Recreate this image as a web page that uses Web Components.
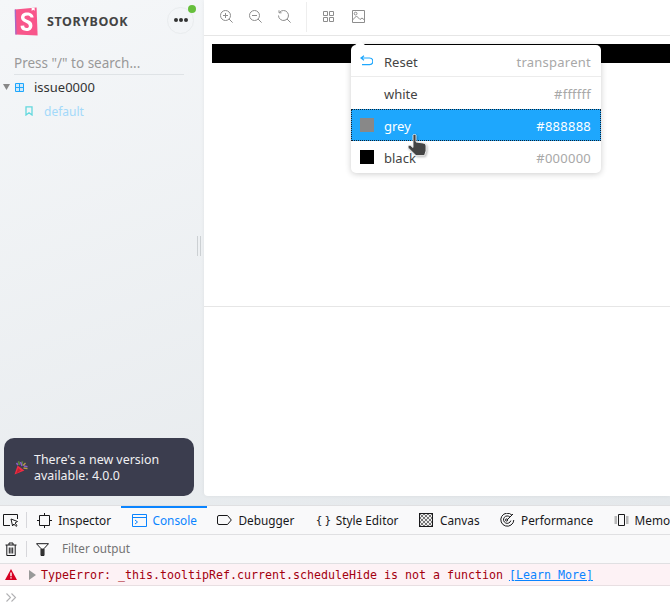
<!DOCTYPE html>
<html>
<head>
<meta charset="utf-8">
<title>Storybook</title>
<style>
    html, body { margin: 0; height: 609px; overflow: hidden; background: #fff; }
    body { font-family: "Noto Sans", sans-serif; }
</style>
</head>
<body>
<sb-app>
    <sb-sidebar slot="sidebar"></sb-sidebar>
    <sb-preview slot="preview"></sb-preview>
    <dev-tools slot="devtools"></dev-tools>
</sb-app>

<script>
class SbApp extends HTMLElement {
    constructor() {
        super();
        this.attachShadow({ mode: 'open' });
        this.shadowRoot.innerHTML = `
            <style>
                :host { display: flex; flex-direction: column; width: 670px; height: 609px; overflow: hidden; }
                #top {
                    display: flex;
                    height: 505px;
                    background: linear-gradient(160deg, #f5f7f9 0%, #e4e8eb 100%);
                }
                #bottom { flex: 1; min-height: 0; }
            </style>
            <div id="top">
                <slot name="sidebar"></slot>
                <slot name="preview"></slot>
            </div>
            <div id="bottom"><slot name="devtools"></slot></div>
        `;
    }
}

class SbSidebar extends HTMLElement {
    constructor() {
        super();
        this.attachShadow({ mode: 'open' });
        this.shadowRoot.innerHTML = `
            <style>
                :host {
                    display: flex;
                    flex-direction: column;
                    width: 204px;
                    flex: none;
                    box-sizing: border-box;
                    position: relative;
                    color: #333;
                    font-size: 13px;
                }
                #head { display: flex; align-items: center; height: 36px; padding: 0 0 0 14px; }
                #logo { display: block; width: 24px; height: 31px; margin-top: 6px; flex: none; }
                #brand { font-size: 12.5px; font-weight: 700; letter-spacing: 0.55px; color: #444; margin-left: 9px; margin-top: 6px; }
                #more {
                    position: relative;
                    width: 27px; height: 27px;
                    box-sizing: border-box;
                    margin-left: auto;
                    margin-right: 10px;
                    margin-top: 4px;
                    border: 1px solid #e9ecee;
                    border-radius: 50%;
                    display: flex; align-items: center; justify-content: center;
                }
                #more i { display: block; width: 4px; height: 4px; background: #333; border-radius: 50%; margin: 0 0.5px; }
                #dot { position: absolute; top: -3px; right: -3px; width: 8px; height: 8px; background: #66bf3c; border-radius: 50%; }
                #search {
                    margin: 15px 20px 0 14px;
                    line-height: 24px;
                    font-size: 13.5px;
                    color: #999;
                    border-bottom: 1px solid #dfe3e6;
                    box-sizing: border-box;
                    height: 24px;
                }
                .row { display: flex; align-items: center; height: 24px; }
                #kind { padding-left: 3px; font-size: 13px; color: #333; }
                #kind svg { display: block; }
                #kind span { margin-left: 10px; }
                #story { padding-left: 25px; color: #a3d9fa; font-size: 12px; }
                #story span { margin-left: 11px; }
                #grip { position: absolute; right: 3px; top: 236px; display: flex; gap: 2px; }
                #grip i { display: block; width: 1px; height: 20px; background: #ccd0d3; }
                sb-toast { margin: auto 10px 9px 4px; }
            </style>
            <div id="head">
                <svg id="logo" viewBox="0 0 24 31">
                    <path d="M1 3.5 L22.6 1.5 L23.6 29.6 L1.6 28.6 Z" fill="#f8568b"/>
                    <path d="M0.6 3.5 H2 L2.6 28.6 H1.3 Z" fill="#a569c7"/>
                    <path d="M17.6 2 l3-.2 .2 3 -1.7 -1 -1.4 1.1z" fill="#fff"/>
                    <path d="M16.6 11.6 C16.4 10 15 9.4 13.2 9.4 C11.4 9.4 10.4 10.2 10.4 11.4 C10.4 14.2 18.4 13.2 18.4 19.4 C18.4 23 15.8 25 12.6 25 C9.2 25 6.6 23.2 6.6 19.8 L10.2 19.6 C10.2 21.4 11.2 22 12.7 22 C14 22 14.9 21.2 14.9 19.9 C14.9 16.4 7 17 7 11.6 C7 8.2 9.6 6.4 13 6.4 C16.4 6.4 19.4 8 19.6 11.4 Z" fill="#fff"/>
                </svg>
                <span id="brand">STORYBOOK</span>
                <div id="more"><i></i><i></i><i></i><b id="dot"></b></div>
            </div>
            <div id="search">Press "/" to search...</div>
            <div class="row" id="kind">
                <svg width="7" height="6" viewBox="0 0 7 6"><path d="M0 0 H7 L3.5 6 Z" fill="#888"/></svg>
                <svg width="9" height="9" viewBox="0 0 9 9" style="margin-left:5px"><path d="M.5 .5 H8.5 V8.5 H.5 Z M4.5 .5 V8.5 M.5 4.5 H8.5" fill="#cfe9fb" stroke="#1ea7fd" stroke-width="1"/></svg>
                <span>issue0000</span>
            </div>
            <div class="row" id="story">
                <svg width="8" height="10" viewBox="0 0 8 10"><path d="M1 .8 H7 V9 L4 6.8 L1 9 Z" fill="none" stroke="#63d8de" stroke-width="1.3"/></svg>
                <span>default</span>
            </div>
            <div id="grip"><i></i><i></i></div>
            <sb-toast>There's a new version available: 4.0.0</sb-toast>
        `;
    }
}

class SbToast extends HTMLElement {
    constructor() {
        super();
        this.attachShadow({ mode: 'open' });
        this.shadowRoot.innerHTML = `
            <style>
                :host {
                    display: flex;
                    align-items: center;
                    height: 58px;
                    box-sizing: border-box;
                    padding: 0 20px 0 10px;
                    background: #3b3d4e;
                    border-radius: 10px;
                    color: #f0f0f2;
                    font-size: 12.4px;
                    line-height: 16px;
                }
                svg { flex: none; margin-right: 6px; margin-top: 2px; }
                span { padding-top: 2px; }
            </style>
            <svg width="14" height="14" viewBox="0 0 14 14">
                <path d="M.5 13.5 L3.6 4.4 L10.4 9.4 Z" fill="#ee2d45"/>
                <path d="M2 12.8 L4.2 7 L7 9.4 Z" fill="#c4202f"/>
                <path d="M4.5 .3 l1 3.7 M8.5 .3 l-.8 3.7" stroke="#5c8a3c" stroke-width="1.6"/>
                <path d="M6.5 1 l1.5 4 M10 5 l3.5 .8 M2.6 1.8 l1.2 2.4" stroke="#8a60c8" stroke-width="1.5"/>
                <path d="M9.5 7 l4 .6 M11.5 2 l-2.4 2.4" stroke="#b89a4a" stroke-width="1.4"/>
            </svg>
            <span><slot></slot></span>
        `;
    }
}

class SbPreview extends HTMLElement {
    constructor() {
        super();
        this.attachShadow({ mode: 'open' });
        const c = '#8d8d8d';
        this.shadowRoot.innerHTML = `
            <style>
                :host {
                    display: flex;
                    flex-direction: column;
                    flex: 1;
                    height: 496px;
                    background: #fff;
                    border-bottom-left-radius: 4px;
                    position: relative;
                    box-shadow: 0 0 4px rgba(0,0,0,.06);
                }
                #bar {
                    display: flex;
                    align-items: center;
                    height: 36px;
                    flex: none;
                    box-sizing: border-box;
                    border-bottom: 1px solid #e6e6e6;
                    padding: 0 0 2px 16px;
                }
                #bar svg { display: block; margin-right: 16px; }
                #sep { width: 1px; height: 30px; background: #eee; margin: 0 16px 0 0; }
                #canvas { height: 271px; flex: none; padding: 8px 0 0 8px; box-sizing: border-box; border-bottom: 1px solid #e6e6e6; }
                #black { height: 19px; background: #000; }
                sb-bg-menu { position: absolute; left: 147px; top: 45px; }
            </style>
            <div id="bar">
                <svg width="13" height="13" viewBox="0 0 13 13" fill="none" stroke="${c}" stroke-width="1"><circle cx="5.5" cy="5.5" r="5"/><path d="M9 9 L12.6 12.6 M3 5.5 H8 M5.5 3 V8"/></svg>
                <svg width="13" height="13" viewBox="0 0 13 13" fill="none" stroke="${c}" stroke-width="1"><circle cx="5.5" cy="5.5" r="5"/><path d="M9 9 L12.6 12.6 M3 5.5 H8"/></svg>
                <svg width="13" height="13" viewBox="0 0 13 13" fill="none" stroke="${c}" stroke-width="1" style="margin-right:15px"><path d="M1.5 2.5 A5 5 0 1 1 .5 5.5 M1 .3 V2.8 H3.5 M9 9 L12.6 12.6"/></svg>
                <div id="sep"></div>
                <svg width="11" height="11" viewBox="0 0 11 11" fill="none" stroke="${c}" stroke-width="1" style="margin-right:18px"><path d="M.5 .5 H4.5 V4.5 H.5 Z M6.5 .5 H10.5 V4.5 H6.5 Z M.5 6.5 H4.5 V10.5 H.5 Z M6.5 6.5 H10.5 V10.5 H6.5 Z"/></svg>
                <svg width="13" height="13" viewBox="0 0 13 13" fill="none" stroke="${c}" stroke-width="1"><path d="M.5 .5 H12.5 V12.5 H.5 Z M.5 10 L4.5 6 L8 9.5 L10 8 L12.5 10"/><circle cx="3.6" cy="3.6" r="1.4"/></svg>
            </div>
            <div id="canvas"><div id="black"></div></div>
            <sb-bg-menu></sb-bg-menu>
        `;
    }
}

class SbBgItem extends HTMLElement {
    constructor() {
        super();
        this.attachShadow({ mode: 'open' });
    }
    connectedCallback() {
        const swatch = this.getAttribute('swatch');
        this.shadowRoot.innerHTML = `
            <style>
                :host {
                    display: flex;
                    align-items: center;
                    height: 32px;
                    box-sizing: border-box;
                    padding: 0 10px 0 9px;
                    color: #444;
                    font-size: 13px;
                }
                :host([active]) {
                    background: #1ea7fd;
                    color: #fff;
                    outline: 1px dotted #123;
                    outline-offset: -1px;
                }
                #icon { width: 14px; height: 14px; flex: none; margin-right: 10px; background: ${swatch || 'transparent'}; display: flex; align-items: center; }
                span.t { padding-top: 2px; }
                #value { margin-left: auto; color: #a8a8a8; letter-spacing: .25px; }
                :host([active]) #value { color: #fff; }
            </style>
            <span id="icon"><slot></slot></span>
            <span class="t">${this.getAttribute('label')}</span>
            <span class="t" id="value">${this.getAttribute('value')}</span>
        `;
    }
}

class SbBgMenu extends HTMLElement {
    constructor() {
        super();
        this.attachShadow({ mode: 'open' });
        this.shadowRoot.innerHTML = `
            <style>
                :host {
                    display: block;
                    width: 250px;
                    background: #fff;
                    border-radius: 5px;
                    box-shadow: 0 1px 6px rgba(0,0,0,.2);
                }
                #arrow {
                    position: absolute;
                    left: 4px; top: -4px;
                    width: 0; height: 0;
                    border-left: 5px solid transparent;
                    border-right: 5px solid transparent;
                    border-bottom: 4px solid #fff;
                }
                #first { border-bottom: 1px solid #ececec; }
                #hand { position: absolute; left: 56px; top: 89px; filter: drop-shadow(1px 1px 1px rgba(0,0,0,.3)); }
            </style>
            <div id="arrow"></div>
            <sb-bg-item id="first" label="Reset" value="transparent">
                <svg width="13" height="11" viewBox="0 0 13 11" fill="none" stroke="#1ea7fd" stroke-width="1.2"><path d="M4 .8 L1 3 L4 5.2 M1 3 H9.5 A3 3 0 0 1 9.5 9.6 H2"/></svg>
            </sb-bg-item>
            <sb-bg-item label="white" value="#ffffff" swatch="#fff"></sb-bg-item>
            <sb-bg-item label="grey" value="#888888" swatch="#888" active></sb-bg-item>
            <sb-bg-item label="black" value="#000000" swatch="#000"></sb-bg-item>
            <svg id="hand" width="20" height="23" viewBox="0 0 20 23">
                <path d="M6 1.2 C6 .1 9 .1 9 1.2 V8 L16 9 C18 9.4 19 10.4 19 12 V17 L17.5 21.6 H9 L1.5 14.2 C0 12.6 2 10.6 3.6 11.6 L6 13.5 Z" fill="#444" stroke="#fff" stroke-width=".8"/>
            </svg>
        `;
    }
}

class DevTab extends HTMLElement {
    constructor() {
        super();
        this.attachShadow({ mode: 'open' });
        this.shadowRoot.innerHTML = `
            <style>
                :host {
                    display: flex;
                    align-items: center;
                    height: 100%;
                    box-sizing: border-box;
                    padding: 0 10.25px;
                    gap: 6px;
                    flex: none;
                    color: #18181a;
                    font-size: 11.8px;
                }
                :host([selected]) { color: #0a84ff; border-top: 2px solid #0a84ff; margin-top: -1px; padding-bottom: 1px; }
                ::slotted([slot=icon]) { display: block; flex: none; width: 15px; white-space: nowrap; }
            </style>
            <slot name="icon"></slot><slot></slot>
        `;
    }
}

class DevTools extends HTMLElement {
    constructor() {
        super();
        this.attachShadow({ mode: 'open' });
        this.shadowRoot.innerHTML = `
            <style>
                :host { display: flex; flex-direction: column; height: 104px; background: #fff; }
                #tabs {
                    display: flex;
                    align-items: center;
                    height: 30px;
                    flex: none;
                    box-sizing: border-box;
                    background: #f9f9fa;
                    border-top: 1px solid #e0e0e2;
                    border-bottom: 1px solid #e0e0e2;
                    overflow: hidden;
                }
                #pick { display: block; margin: 0 7px 0 3px; flex: none; }
                .vsep { width: 1px; height: 16px; background: #d7d7db; flex: none; }
                #tools {
                    display: flex;
                    align-items: center;
                    height: 29px;
                    flex: none;
                    box-sizing: border-box;
                    background: #f9f9fa;
                    border-bottom: 1px solid #e0e0e2;
                    color: #737373;
                    font-size: 11.7px;
                }
                #tools svg { display: block; flex: none; }
                #tools span { margin-bottom: 2px; }
                #msg {
                    display: flex;
                    align-items: center;
                    height: 22px;
                    flex: none;
                    box-sizing: border-box;
                    background: #fdf2f5;
                    border-bottom: 1px solid #e8dfe2;
                    color: #a4000f;
                    font-family: "DejaVu Sans Mono", monospace;
                    font-size: 11.63px;
                    white-space: nowrap;
                }
                #msg svg { display: block; flex: none; }
                #msg a { color: #0a84ff; text-decoration: underline; margin-left: 6px; }
                #prompt { padding: 7px 0 0 6px; }
                #prompt svg { display: block; }
            </style>
            <div id="tabs">
                <svg id="pick" width="16" height="14" viewBox="0 0 16 14" fill="none" stroke="#18181a" stroke-width="1"><path d="M7 12.5 H.5 V1.5 H14.5 V6"/><path d="M8 6 L14.5 8.5 L12 10 L14 12.5 L13 13.4 L10.8 11 L9.6 13 Z" fill="#fff"/></svg>
                <div class="vsep"></div>
                <dev-tab><svg slot="icon" width="15" height="15" viewBox="0 0 15 15" fill="none" stroke="#18181a"><path d="M2.5 2.5 H12.5 V12.5 H2.5 Z M7.5 0 V2.5 M7.5 12.5 V15 M0 7.5 H2.5 M12.5 7.5 H15"/></svg>Inspector</dev-tab>
                <dev-tab selected><svg slot="icon" width="15" height="13" viewBox="0 0 15 13" fill="none" stroke="#0a84ff"><path d="M.5 .5 H14.5 V12.5 H.5 Z M.5 3.5 H14.5 M3 6 L5.5 8 L3 10"/></svg>Console</dev-tab>
                <dev-tab><svg slot="icon" width="15" height="10" viewBox="0 0 15 10" fill="none" stroke="#18181a"><path d="M2 .5 H10.5 L14.3 5 L10.5 9.5 H2 A1.5 1.5 0 0 1 .5 8 V2 A1.5 1.5 0 0 1 2 .5 Z"/></svg>Debugger</dev-tab>
                <dev-tab><span slot="icon" style="font-family:'DejaVu Sans Mono',monospace;font-size:11px;word-spacing:-4.5px;padding-left:1px;box-sizing:border-box">{ }</span>Style Editor</dev-tab>
                <dev-tab><svg slot="icon" width="15" height="14" viewBox="0 0 15 14"><defs><pattern id="chk" width="4" height="4" patternUnits="userSpaceOnUse"><rect width="4" height="4" fill="#eee"/><rect width="2" height="2" fill="#777"/><rect x="2" y="2" width="2" height="2" fill="#777"/></pattern></defs><rect x=".5" y=".5" width="13" height="13" fill="url(#chk)" stroke="#18181a"/></svg>Canvas</dev-tab>
                <dev-tab><svg slot="icon" width="15" height="14" viewBox="0 0 15 14" fill="none" stroke="#18181a"><path d="M12 2.2 A6.5 6.5 0 1 0 13.8 7"/><path d="M10 4.2 A3.7 3.7 0 1 0 10.8 7.6"/><circle cx="6.6" cy="7" r="1.1"/><path d="M7 7 L13 1"/></svg>Performance</dev-tab>
                <dev-tab><svg slot="icon" width="15" height="12" viewBox="0 0 15 12" fill="none" stroke="#18181a"><path d="M4.5 .5 H10.5 V11.5 H4.5 Z"/><path d="M.5 3 H3 M.5 5 H3 M.5 7 H3 M.5 9 H3 M12 3 H14.5 M12 5 H14.5 M12 7 H14.5 M12 9 H14.5" stroke="#777"/></svg>Memory</dev-tab>
            </div>
            <div id="tools">
                <svg width="12" height="14" viewBox="0 0 12 14" fill="none" stroke="#18181a" style="margin:0 9px 0 5px"><path d="M.5 3 H11.5 M4 3 V1 H8 V3 M1.8 3 V13.5 H10.2 V3 M4.3 5.5 V11.5 M6 5.5 V11.5 M7.7 5.5 V11.5"/></svg>
                <div class="vsep"></div>
                <svg width="13" height="13" viewBox="0 0 13 13" style="margin:0 13px 0 9px"><path d="M.5 .7 H12.5 L8 5.6 V12.5 H5 V5.6 Z" fill="#fff" stroke="#18181a"/><path d="M5 5.6 H8 V12.5 H5 Z" fill="#333"/></svg>
                <span>Filter output</span>
            </div>
            <div id="msg">
                <svg width="12" height="11" viewBox="0 0 12 11" style="margin:0 12px 0 5px"><path d="M6 0 L12 11 H0 Z" fill="#d70022"/><path d="M5.3 3.5 H6.7 V7.2 H5.3 Z M5.3 8.2 H6.7 V9.6 H5.3 Z" fill="#fff"/></svg>
                <svg width="7" height="10" viewBox="0 0 7 10" style="margin-right:5px"><path d="M0 0 L7 5 L0 10 Z" fill="#999"/></svg>
                <span>TypeError: _this.tooltipRef.current.scheduleHide is not a function</span>
                <a>[Learn More]</a>
            </div>
            <div id="prompt"><svg width="11" height="9" viewBox="0 0 11 9" fill="none" stroke="#b1b1b3" stroke-width="1.1"><path d="M.5 .5 L4.5 4.5 L.5 8.5 M5.5 .5 L9.5 4.5 L5.5 8.5"/></svg></div>
        `;
    }
}

customElements.define('sb-app', SbApp);
customElements.define('sb-toast', SbToast);
customElements.define('sb-sidebar', SbSidebar);
customElements.define('sb-bg-item', SbBgItem);
customElements.define('sb-bg-menu', SbBgMenu);
customElements.define('sb-preview', SbPreview);
customElements.define('dev-tab', DevTab);
customElements.define('dev-tools', DevTools);
</script>
</body>
</html>
